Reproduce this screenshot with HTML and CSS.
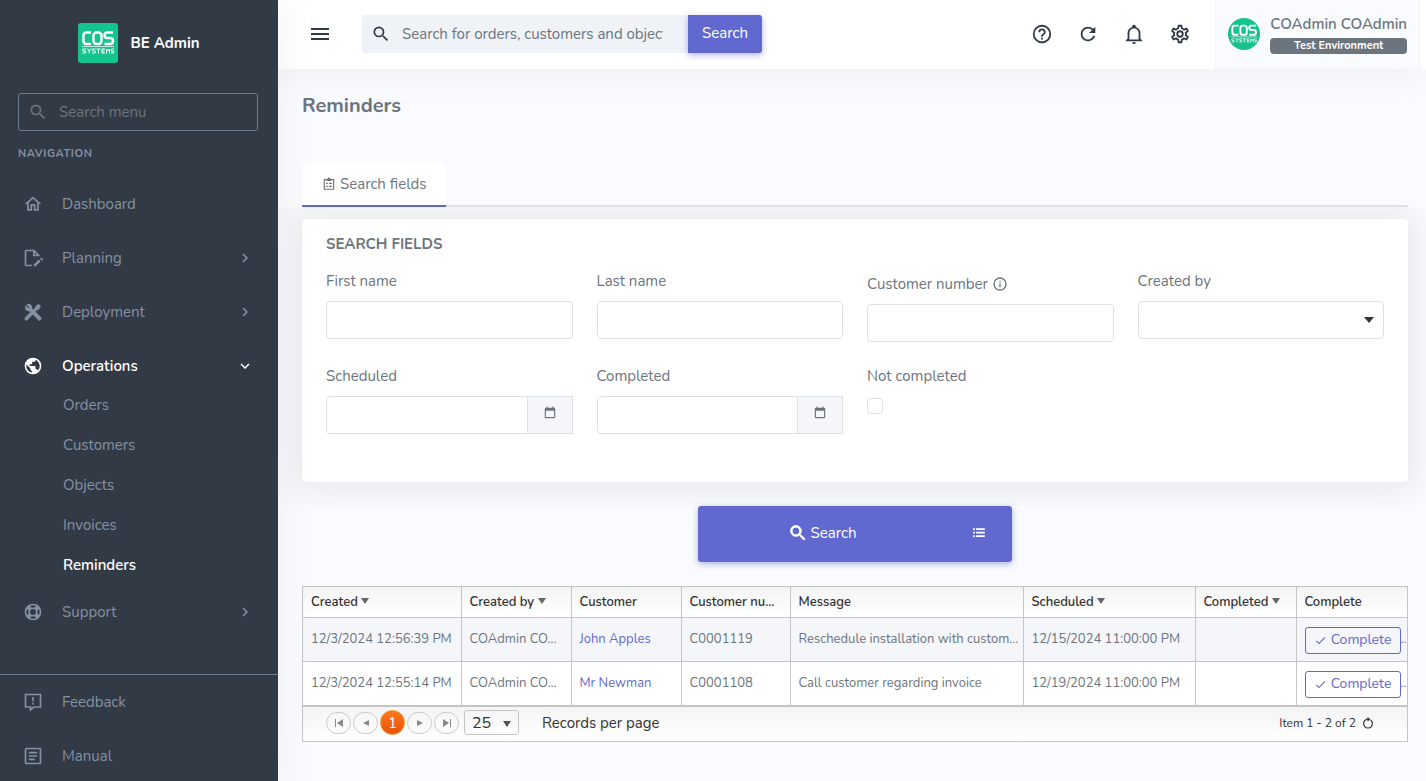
FILE: index.html
```html
<!DOCTYPE html>
<html lang="en">
<head>
    <meta charset="UTF-8">
    <meta name="viewport" content="width=device-width, initial-scale=1.0">
    <title>Reminders - BE Admin</title>
    <link rel="stylesheet" href="styles.css">
</head>
<body>

    <!-- Shared icons -->
    <svg class="sprite" aria-hidden="true">
        <symbol id="i-search" viewBox="0 0 24 24"><path d="M9.5,3A6.5,6.5 0 0,1 16,9.5C16,11.11 15.41,12.59 14.44,13.73L14.71,14H15.5L20.5,19L19,20.5L14,15.5V14.71L13.73,14.44C12.59,15.41 11.11,16 9.5,16A6.5,6.5 0 0,1 3,9.5A6.5,6.5 0 0,1 9.5,3M9.5,5C7,5 5,7 5,9.5C5,12 7,14 9.5,14C12,14 14,12 14,9.5C14,7 12,5 9.5,5Z"/></symbol>
        <symbol id="i-chevron" viewBox="0 0 24 24"><path d="M8.6,16.6L13.2,12L8.6,7.4L10,6L16,12L10,18Z"/></symbol>
        <symbol id="i-calendar" viewBox="0 0 24 24"><path d="M19,19H5V8H19M16,1V3H8V1H6V3H5C3.89,3 3,3.89 3,5V19A2,2 0 0,0 5,21H19A2,2 0 0,0 21,19V5C21,3.89 20.1,3 19,3H18V1"/></symbol>
        <symbol id="i-check" viewBox="0 0 24 24"><path d="M21,7L9,19L3.5,13.5L4.9,12.1L9,16.2L19.6,5.6Z"/></symbol>
        <symbol id="i-logo" viewBox="0 0 40 40">
            <rect width="40" height="40" fill="#14c38e"/>
            <g fill="none" stroke="#fff" stroke-width="2.4">
                <path d="M13 9.500H8.500Q5.500 9.500 5.500 12.500V18Q5.500 21 8.500 21H13"/>
                <rect x="15.500" y="9.500" width="8" height="11.500" rx="3"/>
                <path d="M35 9.500H29.500Q26.500 9.500 26.500 12.200T29.500 15H32Q35 15 35 18T32 21H26.500"/>
            </g>
            <path d="M4 23.500H36" stroke="#fff" stroke-opacity="0.7"/>
            <g fill="none" stroke="#fff" stroke-width="1">
                <path d="M8 26H5.500Q4.500 26 4.500 27T5.500 28H7Q8 28 8 29T7 30H4.500M9.500 25.500L11.200 28L13 25.500M11.200 28V30.500M17.500 26H15Q14.200 26 14.200 27T15 28H16.700Q17.500 28 17.500 29T16.700 30H14.200M18.500 26H22.500M20.500 26V30.500M27 26H24V30H27M24 28H26.500M28.500 30.500V26L30 28L31.500 26V30.500M36 26H33.800Q33 26 33 27T33.800 28H35.200Q36 28 36 29T35.200 30H33"/>
            </g>
        </symbol>
    </svg>

    <div class="wrapper">

        <!-- Left menu -->
        <aside class="sidebar">
            <a href="#" class="brand">
                <svg class="brand-logo"><use href="#i-logo"/></svg>
                <span>BE Admin</span>
            </a>
            <div class="menu-search">
                <svg class="icon"><use href="#i-search"/></svg>
                <input type="text" placeholder="Search menu" aria-label="Search menu">
            </div>
            <h6 class="menu-title">Navigation</h6>

            <nav class="menu">
                <a href="#" class="menu-item">
                    <svg class="icon" viewBox="0 0 24 24"><path d="M12 5.700L17 10.200V18H15V12H9V18H7V10.200L12 5.700M12 3L2 12H5V20H11V14H13V20H19V12H22"/></svg>
                    <span>Dashboard</span>
                </a>
                <a href="#" class="menu-item">
                    <svg class="icon" viewBox="0 0 24 24"><g fill="none" stroke="currentColor" stroke-width="2"><path d="M11 21H4Q3 21 3 20V4Q3 3 4 3H13L19 9V10M13 3V9H19"/><path d="M13.500 21.500L20 15" stroke-width="3"/><path d="M21 12L23.500 14.500"/></g></svg>
                    <span>Planning</span>
                    <svg class="icon arrow"><use href="#i-chevron"/></svg>
                </a>
                <a href="#" class="menu-item">
                    <svg class="icon" viewBox="0 0 24 24"><path d="M5.300 3.300A3.700 3.700 0 0 1 10.200 7.900L21.800 19.500L19.500 21.800L7.900 10.200A3.700 3.700 0 0 1 3.300 5.300L5.500 7.500A1.500 1.500 0 0 0 7.600 5.400ZM15.700 5.200L18.900 3.400L20.600 5.100L18.800 8.300L17 8.700L14.900 10.800L13.200 9.100L15.300 7ZM8.900 13.200L10.800 15.100L4.900 21.100A1.300 1.300 0 0 1 3 19.100Z" stroke="currentColor" stroke-width="1.5"/></svg>
                    <span>Deployment</span>
                    <svg class="icon arrow"><use href="#i-chevron"/></svg>
                </a>
                <a href="#" class="menu-item open">
                    <svg class="icon" viewBox="0 0 24 24"><path d="M17.900,17.390C17.640,16.590 16.890,16 16,16H15V13A1,1 0 0,0 14,12H8V10H10A1,1 0 0,0 11,9V7H13A2,2 0 0,0 15,5V4.590C17.930,5.770 20,8.640 20,12C20,14.080 19.200,15.970 17.900,17.390M11,19.930C7.050,19.440 4,16.080 4,12C4,11.380 4.080,10.780 4.210,10.210L9,15V16A2,2 0 0,0 11,18M12,2A10,10 0 0,0 2,12A10,10 0 0,0 12,22A10,10 0 0,0 22,12A10,10 0 0,0 12,2Z"/></svg>
                    <span>Operations</span>
                    <svg class="icon arrow"><use href="#i-chevron"/></svg>
                </a>
                <div class="submenu">
                    <a href="#">Orders</a>
                    <a href="#">Customers</a>
                    <a href="#">Objects</a>
                    <a href="#">Invoices</a>
                    <a href="#" class="active">Reminders</a>
                </div>
                <a href="#" class="menu-item">
                    <svg class="icon" viewBox="0 0 24 24"><g fill="none" stroke="currentColor"><circle cx="12" cy="12" r="9" stroke-width="2"/><circle cx="12" cy="12" r="4.500" stroke-width="2"/><path d="M5.500 5.500L9 9M18.500 5.500L15 9M5.500 18.500L9 15M18.500 18.500L15 15" stroke-width="5"/></g></svg>
                    <span>Support</span>
                    <svg class="icon arrow"><use href="#i-chevron"/></svg>
                </a>
            </nav>

            <nav class="menu menu-bottom">
                <a href="#" class="menu-item">
                    <svg class="icon" viewBox="0 0 24 24"><path d="M3 3H21V18H13L9 21.500V18H3Z" fill="none" stroke="currentColor" stroke-width="2"/><path d="M11 6H13V11H11ZM11 13H13V15H11Z"/></svg>
                    <span>Feedback</span>
                </a>
                <a href="#" class="menu-item">
                    <svg class="icon" viewBox="0 0 24 24"><rect x="3" y="3" width="18" height="18" rx="1" fill="none" stroke="currentColor" stroke-width="2"/><path d="M7 7H17V9H7ZM7 11H17V13H7ZM7 15H14V17H7Z"/></svg>
                    <span>Manual</span>
                </a>
            </nav>
        </aside>

        <div class="page">

            <!-- Top bar -->
            <header class="topbar">
                <button type="button" class="icon-btn menu-toggle" aria-label="Toggle menu">
                    <svg viewBox="0 0 24 24"><path d="M3,6H21V8H3V6M3,11H21V13H3V11M3,16H21V18H3V16Z"/></svg>
                </button>
                <form class="top-search">
                    <svg class="icon"><use href="#i-search"/></svg>
                    <input type="text" placeholder="Search for orders, customers and objects" aria-label="Search for orders, customers and objects">
                    <button type="button" class="btn-primary">Search</button>
                </form>
                <div class="top-icons">
                    <button type="button" class="icon-btn" aria-label="Help">
                        <svg viewBox="0 0 24 24"><path d="M11,18H13V16H11V18M12,2A10,10 0 0,0 2,12A10,10 0 0,0 12,22A10,10 0 0,0 22,12A10,10 0 0,0 12,2M12,20C7.590,20 4,16.410 4,12C4,7.590 7.590,4 12,4C16.410,4 20,7.590 20,12C20,16.410 16.410,20 12,20M12,6A4,4 0 0,0 8,10H10A2,2 0 0,1 12,8A2,2 0 0,1 14,10C14,12 11,11.750 11,15H13C13,12.750 16,12.500 16,10A4,4 0 0,0 12,6Z"/></svg>
                    </button>
                    <button type="button" class="icon-btn" aria-label="Refresh">
                        <svg viewBox="0 0 24 24"><path d="M17.650,6.350C16.200,4.900 14.210,4 12,4A8,8 0 0,0 4,12A8,8 0 0,0 12,20C15.730,20 18.840,17.450 19.730,14H17.650C16.830,16.330 14.610,18 12,18A6,6 0 0,1 6,12A6,6 0 0,1 12,6C13.660,6 15.140,6.690 16.220,7.780L13,11H20V4L17.650,6.350Z"/></svg>
                    </button>
                    <button type="button" class="icon-btn" aria-label="Notifications">
                        <svg viewBox="0 0 24 24"><path d="M10 21H14C14 22.100 13.100 23 12 23S10 22.100 10 21M21 19V20H3V19L5 17V11C5 7.900 7.030 5.170 10 4.290V4C10 2.900 10.900 2 12 2S14 2.900 14 4V4.290C16.970 5.170 19 7.900 19 11V17L21 19M17 11C17 8.240 14.760 6 12 6S7 8.240 7 11V18H17V11Z"/></svg>
                    </button>
                    <button type="button" class="icon-btn" aria-label="Settings">
                        <svg viewBox="0 0 24 24"><path d="M12,8A4,4 0 0,1 16,12A4,4 0 0,1 12,16A4,4 0 0,1 8,12A4,4 0 0,1 12,8M12,10A2,2 0 0,0 10,12A2,2 0 0,0 12,14A2,2 0 0,0 14,12A2,2 0 0,0 12,10M10,22C9.750,22 9.540,21.820 9.500,21.580L9.130,18.930C8.500,18.680 7.960,18.340 7.440,17.940L4.950,18.950C4.730,19.030 4.460,18.950 4.340,18.730L2.340,15.270C2.210,15.050 2.270,14.780 2.460,14.630L4.570,12.970L4.500,12L4.570,11L2.460,9.370C2.270,9.220 2.210,8.950 2.340,8.730L4.340,5.270C4.460,5.050 4.730,4.960 4.950,5.050L7.440,6.050C7.960,5.660 8.500,5.320 9.130,5.070L9.500,2.420C9.540,2.180 9.750,2 10,2H14C14.250,2 14.460,2.180 14.500,2.420L14.870,5.070C15.500,5.320 16.040,5.660 16.560,6.050L19.050,5.050C19.270,4.960 19.540,5.050 19.660,5.270L21.660,8.730C21.790,8.950 21.730,9.220 21.540,9.370L19.430,11L19.500,12L19.430,13L21.540,14.630C21.730,14.780 21.790,15.050 21.660,15.270L19.660,18.730C19.540,18.950 19.270,19.040 19.050,18.950L16.560,17.950C16.040,18.340 15.500,18.680 14.870,18.930L14.500,21.580C14.460,21.820 14.250,22 14,22H10M11.250,4L10.880,6.610C9.680,6.860 8.620,7.500 7.850,8.390L5.440,7.350L4.690,8.650L6.800,10.200C6.400,11.370 6.400,12.640 6.800,13.800L4.680,15.360L5.430,16.660L7.860,15.620C8.630,16.500 9.680,17.140 10.870,17.380L11.240,20H12.760L13.130,17.390C14.320,17.140 15.370,16.500 16.140,15.620L18.570,16.660L19.320,15.360L17.200,13.810C17.600,12.640 17.600,11.370 17.200,10.200L19.310,8.650L18.560,7.350L16.150,8.390C15.380,7.500 14.320,6.860 13.120,6.620L12.750,4H11.250Z"/></svg>
                    </button>
                </div>
                <a href="#" class="user">
                    <svg class="avatar"><use href="#i-logo"/></svg>
                    <span class="user-info">
                        <span class="user-name">COAdmin COAdmin</span>
                        <span class="badge">Test Environment</span>
                    </span>
                </a>
            </header>

            <main class="content">
                <h4 class="page-title">Reminders</h4>

                <div class="tabs">
                    <a href="#search-fields" class="tab">
                        <svg viewBox="0 0 24 24"><path d="M4 4.500H20V21H4Z" fill="none" stroke="currentColor" stroke-width="2"/><path d="M8 3H10A2 2 0 0 1 14 3H16V7H8ZM7 10H10V12H7ZM12 10H17V12H12ZM7 15H10V17H7ZM12 15H17V17H12Z"/></svg>
                        Search fields
                    </a>
                </div>

                <section class="tab-content" id="search-fields">
                    <div class="card">
                        <h5 class="card-title">Search fields</h5>
                        <div class="fields">
                            <div class="field">
                                <label for="first-name">First name</label>
                                <input type="text" id="first-name">
                            </div>
                            <div class="field">
                                <label for="last-name">Last name</label>
                                <input type="text" id="last-name">
                            </div>
                            <div class="field">
                                <label for="customer-number" class="with-info">Customer number
                                    <svg viewBox="0 0 24 24"><path d="M11,9H13V7H11M12,20C7.590,20 4,16.410 4,12C4,7.590 7.590,4 12,4C16.410,4 20,7.590 20,12C20,16.410 16.410,20 12,20M12,2A10,10 0 0,0 2,12A10,10 0 0,0 12,22A10,10 0 0,0 22,12A10,10 0 0,0 12,2M11,17H13V11H11V17Z"/></svg>
                                </label>
                                <input type="text" id="customer-number">
                            </div>
                            <div class="field">
                                <label for="created-by">Created by</label>
                                <div class="select-wrap">
                                    <select id="created-by"><option></option></select>
                                </div>
                            </div>
                            <div class="field">
                                <label for="scheduled">Scheduled</label>
                                <div class="date-group">
                                    <input type="text" id="scheduled">
                                    <button type="button" aria-label="Pick scheduled date"><svg><use href="#i-calendar"/></svg></button>
                                </div>
                            </div>
                            <div class="field">
                                <label for="completed">Completed</label>
                                <div class="date-group">
                                    <input type="text" id="completed">
                                    <button type="button" aria-label="Pick completed date"><svg><use href="#i-calendar"/></svg></button>
                                </div>
                            </div>
                            <div class="field">
                                <label for="not-completed">Not completed</label>
                                <input type="checkbox" id="not-completed">
                            </div>
                        </div>
                    </div>
                </section>

                <div class="search-actions">
                    <button type="button" class="btn-search"><svg class="icon"><use href="#i-search"/></svg>Search</button>
                    <button type="button" class="btn-list" aria-label="Search options">
                        <svg viewBox="0 0 24 24"><path d="M2 4H5V7H2ZM7 4H22V7H7ZM2 10H5V13H2ZM7 10H22V13H7ZM2 16H5V19H2ZM7 16H22V19H7Z"/></svg>
                    </button>
                </div>

                <!-- Result grid -->
                <div class="grid">
                    <table>
                        <colgroup>
                            <col class="c-created"><col class="c-by"><col class="c-by"><col class="c-number">
                            <col class="c-message"><col class="c-scheduled"><col class="c-completed"><col class="c-action">
                        </colgroup>
                        <thead>
                            <tr>
                                <th>Created <i class="sort"></i></th>
                                <th>Created by <i class="sort"></i></th>
                                <th>Customer</th>
                                <th>Customer nu...</th>
                                <th>Message</th>
                                <th>Scheduled <i class="sort"></i></th>
                                <th>Completed <i class="sort"></i></th>
                                <th>Complete</th>
                            </tr>
                        </thead>
                        <tbody>
                            <tr>
                                <td>12/3/2024 12:56:39 PM</td>
                                <td>COAdmin CO...</td>
                                <td><a href="#">John Apples</a></td>
                                <td>C0001119</td>
                                <td>Reschedule installation with custom...</td>
                                <td>12/15/2024 11:00:00 PM</td>
                                <td></td>
                                <td class="action"><button type="button" class="btn-outline"><svg><use href="#i-check"/></svg>Complete</button>..</td>
                            </tr>
                            <tr>
                                <td>12/3/2024 12:55:14 PM</td>
                                <td>COAdmin CO...</td>
                                <td><a href="#">Mr Newman</a></td>
                                <td>C0001108</td>
                                <td>Call customer regarding invoice</td>
                                <td>12/19/2024 11:00:00 PM</td>
                                <td></td>
                                <td class="action"><button type="button" class="btn-outline"><svg><use href="#i-check"/></svg>Complete</button>..</td>
                            </tr>
                        </tbody>
                    </table>
                    <div class="pager">
                        <button type="button" class="page-btn" aria-label="First page"><svg viewBox="0 0 10 10"><path d="M1 1H2V9H1ZM9 1V9L3 5Z"/></svg></button>
                        <button type="button" class="page-btn" aria-label="Previous page"><svg viewBox="0 0 10 10"><path d="M8 2V8L2 5Z"/></svg></button>
                        <button type="button" class="page-btn current">1</button>
                        <button type="button" class="page-btn" aria-label="Next page"><svg viewBox="0 0 10 10"><path d="M2 2V8L8 5Z"/></svg></button>
                        <button type="button" class="page-btn" aria-label="Last page"><svg viewBox="0 0 10 10"><path d="M8 1H9V9H8ZM1 1V9L7 5Z"/></svg></button>
                        <div class="size-wrap">
                            <select id="page-size"><option>25</option></select>
                        </div>
                        <label for="page-size">Records per page</label>
                        <span class="pager-info">Item 1 - 2 of 2</span>
                        <button type="button" class="reload" aria-label="Reload"><svg viewBox="0 0 12 12"><path d="M8.500 3A4.400 4.400 0 1 1 3.500 3Q4.500 2.200 6 2.200" fill="none" stroke="currentColor" stroke-width="1.2"/><path d="M5.500 0L8.500 2.200L5.500 4.400Z"/></svg></button>
                    </div>
                </div>
            </main>
        </div>
    </div>

</body>
</html>
```
FILE: styles.css
```css
/* General */
* {
    box-sizing: border-box;
}
body {
    margin: 0;
    font-family: Nunito, Lato, sans-serif;
    font-size: 15px;
    line-height: 22px;
    color: #6c757d;
    background-color: #fafbfe;
}
a {
    color: inherit;
    text-decoration: none;
}
button, input, select {
    font: inherit;
    color: inherit;
    margin: 0;
}
button {
    cursor: pointer;
}
svg {
    fill: currentColor;
    flex: none;
}
h4, h5, h6 {
    margin: 0;
}
.sprite {
    display: none;
}
.icon {
    width: 20px;
    height: 20px;
}
.wrapper {
    display: flex;
    min-height: 100vh;
}

/* Left menu */
.sidebar {
    position: relative;
    z-index: 2;
    flex: none;
    width: 278px;
    background-color: #323a46;
    color: #8391a2;
    box-shadow: 0 0 35px rgba(154, 161, 171, 0.15);
}
.brand {
    display: flex;
    align-items: center;
    justify-content: center;
    gap: 12px;
    height: 86px;
    margin-bottom: 7px;
    color: #fff;
    font-weight: bold;
}
.brand-logo {
    width: 40px;
    height: 40px;
    border-radius: 3px;
}
.menu-search {
    display: flex;
    align-items: center;
    height: 38px;
    margin: 0 20px 0 18px;
    padding: 0 9px;
    gap: 11px;
    border: 1px solid #6c7a89;
    border-radius: 3px;
    color: #6c757d;
}
.menu-search input {
    flex: 1;
    min-width: 0;
    padding: 0;
    border: 0;
    outline: 0;
    background: none;
}
input::placeholder {
    color: #6c757d;
    opacity: 1;
}
.menu-title {
    padding: 12px 18px;
    font-size: 11px;
    letter-spacing: 0.05em;
    text-transform: uppercase;
}
.menu-item {
    display: flex;
    align-items: center;
    gap: 19px;
    height: 54px;
    padding: 0 24px 0 23px;
}
.menu-item .arrow {
    width: 18px;
    height: 18px;
    margin-left: auto;
}
.open {
    color: #fff;
    font-weight: 600;
}
.open .arrow {
    transform: rotate(90deg);
}
.submenu {
    margin-top: -8px;
}
.submenu a {
    display: block;
    padding: 9px 63px;
}
.submenu .active {
    color: #fff;
    font-weight: 600;
}
.menu-bottom {
    margin-top: 35px;
    border-top: 1px solid #6c7a89;
}

/* Top bar */
.page {
    flex: 1;
    min-width: 0;
}
.topbar {
    position: relative;
    z-index: 1;
    display: flex;
    align-items: center;
    height: 69px;
    padding: 0 6px 2px 30px;
    background-color: #fff;
    box-shadow: 0 0 35px rgba(154, 161, 171, 0.15);
}
.icon-btn {
    padding: 0;
    border: 0;
    background: none;
    color: #313a46;
}
.icon-btn svg {
    display: block;
    width: 22px;
    height: 22px;
}
.menu-toggle svg {
    width: 24px;
    height: 24px;
}
.top-search {
    display: flex;
    align-items: center;
    width: 400px;
    height: 38px;
    margin-left: 30px;
    padding-left: 9px;
    border-radius: 3px;
    background-color: #eff3f8;
    color: #313a46;
}
.top-search input {
    flex: 1;
    min-width: 0;
    margin: 0 25px 0 11px;
    padding: 0;
    border: 0;
    outline: 0;
    background: none;
}
.btn-primary {
    width: 74px;
    height: 38px;
    padding: 0 0 2px;
    border: 0;
    border-radius: 0 3px 3px 0;
    background-color: #6169d0;
    color: #fff;
    box-shadow: 0 2px 6px rgba(97, 105, 208, 0.5);
}
.top-icons {
    display: flex;
    gap: 24px;
    margin-left: auto;
    padding-right: 24px;
}
.user {
    display: flex;
    align-items: center;
    align-self: flex-start;
    gap: 10px;
    height: 69px;
    padding: 0 12px 2px;
    border: 1px solid #f1f3fa;
    border-width: 0 1px;
    background-color: #fafbfe;
}
.avatar {
    width: 32px;
    height: 32px;
    border-radius: 50%;
}
.user-info {
    display: flex;
    flex-direction: column;
    gap: 3px;
}
.user-name {
    font-weight: 600;
}
.badge {
    border-radius: 4px;
    background-color: #6c757d;
    color: #fff;
    font-size: 11px;
    font-weight: bold;
    line-height: 16px;
    text-align: center;
}

/* Content */
.content {
    padding: 0 18px 24px 24px;
}
.page-title {
    font-size: 20px;
    line-height: 74px;
}
.tabs {
    display: flex;
    margin-top: 20px;
    border-bottom: 2px solid #dee2e6;
}
.tab {
    display: flex;
    align-items: center;
    gap: 4px;
    height: 44px;
    margin-bottom: -2px;
    padding: 0 20px;
    border-bottom: 2px solid #6169d0;
    border-radius: 3px 3px 0 0;
    background-color: #fff;
}
.tab svg {
    width: 14px;
    height: 14px;
}
.tab-content {
    margin: 0 -18px 0 -24px;
    padding: 12px 18px 24px 24px;
    overflow: hidden;
}
.card {
    padding: 14px 24px 48px;
    border-radius: 4px;
    background-color: #fff;
    box-shadow: 0 0 35px 8px rgba(154, 161, 171, 0.2);
}
.card-title {
    margin-bottom: 14px;
    font-size: 15px;
    text-transform: uppercase;
}
.fields {
    display: grid;
    grid-template-columns: repeat(4, 1fr);
    gap: 22px 24px;
}
.field label {
    display: flex;
    align-items: center;
    gap: 4px;
    margin-bottom: 8px;
    line-height: 24px;
}
.field .with-info {
    padding-top: 3px;
}
.field label svg {
    width: 16px;
    height: 16px;
}
.field input[type="text"], .field select {
    display: block;
    width: 100%;
    height: 38px;
    padding: 0 12px;
    border: 1px solid #dee2e6;
    border-radius: 4px;
    background-color: #fff;
}
.field select {
    appearance: none;
}
.select-wrap, .size-wrap {
    position: relative;
}
.select-wrap::after {
    content: "";
    position: absolute;
    right: 10px;
    top: 16px;
    border: 5px solid transparent;
    border-top: 6px solid #333;
    border-bottom: 0;
    pointer-events: none;
}
.date-group {
    display: flex;
}
.date-group input[type="text"] {
    flex: 1;
    min-width: 0;
    border-radius: 4px 0 0 4px;
}
.date-group button {
    width: 46px;
    margin-left: -1px;
    padding: 0;
    border: 1px solid #dee2e6;
    background-color: #f5f6fa;
}
.date-group svg {
    width: 14px;
    height: 14px;
}
.field input[type="checkbox"] {
    display: block;
    appearance: none;
    width: 16px;
    height: 16px;
    margin-top: 10px;
    border: 1px solid #dee2e6;
    border-radius: 4px;
    background-color: #fff;
}

/* Search button */
.search-actions {
    display: flex;
    width: 314px;
    height: 56px;
    margin: 0 auto 24px;
    border-radius: 3px;
    box-shadow: 0 2px 6px rgba(97, 105, 208, 0.5);
}
.search-actions button {
    display: flex;
    align-items: center;
    justify-content: center;
    gap: 3px;
    padding: 0 0 2px;
    border: 0;
    background-color: #6169d0;
    color: #fff;
}
.btn-search {
    flex: 1;
    border-radius: 3px 0 0 3px;
}
.btn-search .icon {
    stroke: currentColor;
    stroke-width: 1px;
}
.search-actions .btn-list {
    width: 66px;
    border-radius: 0 3px 3px 0;
}
.btn-list svg {
    width: 14px;
    height: 14px;
}

/* Grid */
.grid {
    border: 1px solid #c5c5c5;
    font-size: 13px;
}
table {
    width: 100%;
    table-layout: fixed;
    border-collapse: collapse;
}
.c-created { width: 158px; }
.c-by { width: 110px; }
.c-number { width: 109px; }
.c-message { width: 233px; }
.c-scheduled { width: 172px; }
.c-completed { width: 101px; }
.c-action { width: 111px; }
th, td {
    padding: 0 8px;
    border-right: 1px solid #c5c5c5;
    border-bottom: 1px solid #c5c5c5;
    text-align: left;
    white-space: nowrap;
    overflow: hidden;
}
th:last-child, td:last-child {
    border-right: 0;
}
th {
    height: 30px;
    padding-top: 1px;
    color: #333;
    font-weight: 600;
}
thead {
    background: linear-gradient(#f4f4f4, #fff);
}
tbody tr {
    height: 44px;
    background-color: #fff;
}
tbody tr:nth-child(odd) {
    background-color: #f5f6fa;
}
td a {
    color: #6169d0;
}
td.action {
    padding-right: 0;
}
.sort {
    display: inline-block;
    vertical-align: 2px;
    border: 4px solid transparent;
    border-top: 6px solid #666;
    border-bottom: 0;
}
.btn-outline {
    display: inline-flex;
    align-items: center;
    justify-content: center;
    gap: 4px;
    width: 96px;
    height: 27px;
    margin-top: 2px;
    padding: 0;
    border: 1px solid #6169d0;
    border-radius: 3px;
    background: none;
    color: #6169d0;
    font-size: 14px;
    vertical-align: middle;
}
.btn-outline svg {
    width: 13px;
    height: 13px;
}
.pager {
    display: flex;
    align-items: center;
    gap: 2px;
    height: 35px;
    padding: 0 33px 2px 23px;
    border-top: 1px solid #c5c5c5;
    background: linear-gradient(#f4f4f4, #fff);
    color: #333;
}
.page-btn {
    display: flex;
    align-items: center;
    justify-content: center;
    width: 25px;
    height: 22px;
    padding: 0;
    border: 1px solid #ccc;
    border-radius: 11px;
    background: none;
    color: #888;
}
.page-btn svg {
    width: 10px;
    height: 10px;
}
.page-btn.current {
    height: 25px;
    border-color: #f7941e;
    border-radius: 50%;
    background: linear-gradient(#f97b1c, #e8500c);
    color: #fff;
    font-size: 15px;
}
.size-wrap {
    margin: 0 21px 0 3px;
}
.size-wrap select {
    display: block;
    width: 55px;
    height: 25px;
    padding: 0 7px;
    appearance: none;
    border: 1px solid #c5c5c5;
    border-radius: 3px;
    background: none;
    font-size: 16px;
}
.size-wrap::after {
    content: "";
    position: absolute;
    right: 8px;
    top: 11px;
    border: 4px solid transparent;
    border-top: 6px solid #555;
    border-bottom: 0;
    pointer-events: none;
}
.pager label {
    font-size: 15px;
}
.pager-info {
    margin-left: auto;
    font-size: 12px;
}
.reload {
    margin-left: 4px;
    padding: 0;
    border: 0;
    background: none;
}
.reload svg {
    display: block;
    width: 12px;
    height: 12px;
}
```
